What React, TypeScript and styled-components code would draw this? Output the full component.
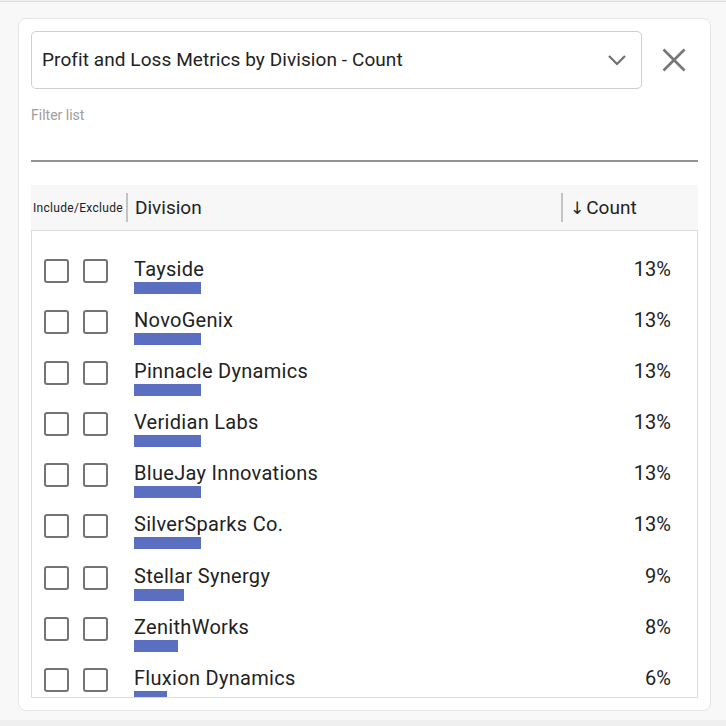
import React from "react";
import styled, { createGlobalStyle } from "styled-components";

const GlobalStyle = createGlobalStyle`
  html, body {
    margin: 0;
    padding: 0;
    background: #efefef;
    font-family: Roboto, "Liberation Sans", Arial, sans-serif;
    color: #222;
  }
  * { box-sizing: border-box; }
`;

const Page = styled.div`
  margin-top: 1px;
  border-top: 1px solid #dcdcdc;
  background: #f8f8f8;
  height: 719px;
  padding: 16px 0 0 18px;
`;

const Card = styled.div`
  width: 693px;
  height: 693px;
  background: #fff;
  border: 1px solid #e6e6e6;
  border-radius: 8px;
  padding: 12px;
  display: flex;
  flex-direction: column;
`;

const TopRow = styled.div`
  display: flex;
  align-items: center;
  height: 58px;
`;

const Select = styled.div`
  width: 611px;
  height: 58px;
  border: 1px solid #cfcfcf;
  border-radius: 5px;
  display: flex;
  align-items: center;
  padding: 0 14px 0 10px;
  font-size: 19px;
  letter-spacing: 0.08px;
  color: #222;
`;

const SelectText = styled.span`
  flex: 1;
  margin-top: -2px;
`;

const CloseButton = styled.button`
  border: none;
  background: none;
  padding: 0;
  margin-left: 20px;
  width: 24px;
  height: 24px;
  display: flex;
  align-items: center;
  justify-content: center;
  cursor: pointer;
`;

const FilterLabel = styled.div`
  margin-top: 18px;
  font-size: 14px;
  line-height: 16px;
  height: 16px;
  color: #9e9e9e;
`;

const FilterInput = styled.div`
  height: 39px;
  border-bottom: 2px solid #939393;
`;

const Header = styled.div`
  margin-top: 23px;
  height: 45px;
  background: #f7f7f7;
  display: flex;
  align-items: center;
  padding-left: 2px;
`;

const IncludeLabel = styled.span`
  font-size: 12px;
  letter-spacing: 0.3px;
  width: 93px;
  white-space: nowrap;
`;

const HeaderSep = styled.span`
  width: 2px;
  height: 29px;
  background: #c4c4c4;
`;

const HeaderLabel = styled.span<{ $flex?: boolean; $width?: number }>`
  font-size: 19px;
  padding-left: 7px;
  display: flex;
  align-items: center;
  ${(p) => (p.$flex ? "flex: 1;" : "")}
  ${(p) => (p.$width ? `width: ${p.$width}px;` : "")}
`;

const Arrow = styled.span`
  font-family: "DejaVu Sans", "Liberation Sans", sans-serif;
  font-size: 17px;
  color: #222;
  margin-right: 2px;
`;

const List = styled.div`
  height: 468px;
  border: 1px solid #dcdcdc;
  overflow: hidden;
  padding-top: 20px;
`;

const Row = styled.div`
  height: 51.1px;
  padding: 7px 26px 0 12px;
  display: flex;
  align-items: flex-start;
`;

const Checks = styled.div`
  display: flex;
  gap: 14px;
  margin-top: 1px;
`;

const Box = styled.span`
  width: 25px;
  height: 24px;
  border: 2.5px solid #747474;
  border-radius: 3px;
`;

const NameCol = styled.div`
  flex: 1;
  margin-left: 26px;
  display: flex;
  flex-direction: column;
`;

const Name = styled.span`
  font-size: 20px;
  letter-spacing: 0.3px;
  line-height: 23px;
  color: #222;
`;

const Bar = styled.span`
  display: block;
  margin-top: 1px;
  height: 12px;
  background: #5b6fc1;
`;

const Percent = styled.span`
  font-size: 20px;
  line-height: 23px;
  color: #222;
`;

const rows: { name: string; pct: string; w: number }[] = [
  { name: "Tayside", pct: "13%", w: 67 },
  { name: "NovoGenix", pct: "13%", w: 67 },
  { name: "Pinnacle Dynamics", pct: "13%", w: 67 },
  { name: "Veridian Labs", pct: "13%", w: 67 },
  { name: "BlueJay Innovations", pct: "13%", w: 67 },
  { name: "SilverSparks Co.", pct: "13%", w: 67 },
  { name: "Stellar Synergy", pct: "9%", w: 50 },
  { name: "ZenithWorks", pct: "8%", w: 44 },
  { name: "Fluxion Dynamics", pct: "6%", w: 33 },
];

export default function App() {
  return (
    <>
      <GlobalStyle />
      <Page>
        <Card>
          <TopRow>
            <Select>
              <SelectText>Profit and Loss Metrics by Division - Count</SelectText>
              <svg width="20" height="12" viewBox="0 0 20 12">
                <polyline points="2,2 10,10 18,2" fill="none" stroke="#707070" strokeWidth="2.2" />
              </svg>
            </Select>
            <CloseButton aria-label="Close">
              <svg width="24" height="24" viewBox="0 0 24 24">
                <line x1="1.5" y1="1.5" x2="22.5" y2="22.5" stroke="#777" strokeWidth="2.6" />
                <line x1="22.5" y1="1.5" x2="1.5" y2="22.5" stroke="#777" strokeWidth="2.6" />
              </svg>
            </CloseButton>
          </TopRow>
          <FilterLabel>Filter list</FilterLabel>
          <FilterInput />
          <Header>
            <IncludeLabel>Include/Exclude</IncludeLabel>
            <HeaderSep />
            <HeaderLabel $flex>Division</HeaderLabel>
            <HeaderSep />
            <HeaderLabel $width={135}>
              <Arrow>↓</Arrow>Count
            </HeaderLabel>
          </Header>
          <List>
            {rows.map((r) => (
              <Row key={r.name}>
                <Checks>
                  <Box />
                  <Box />
                </Checks>
                <NameCol>
                  <Name>{r.name}</Name>
                  <Bar style={{ width: r.w }} />
                </NameCol>
                <Percent>{r.pct}</Percent>
              </Row>
            ))}
          </List>
        </Card>
      </Page>
    </>
  );
}
